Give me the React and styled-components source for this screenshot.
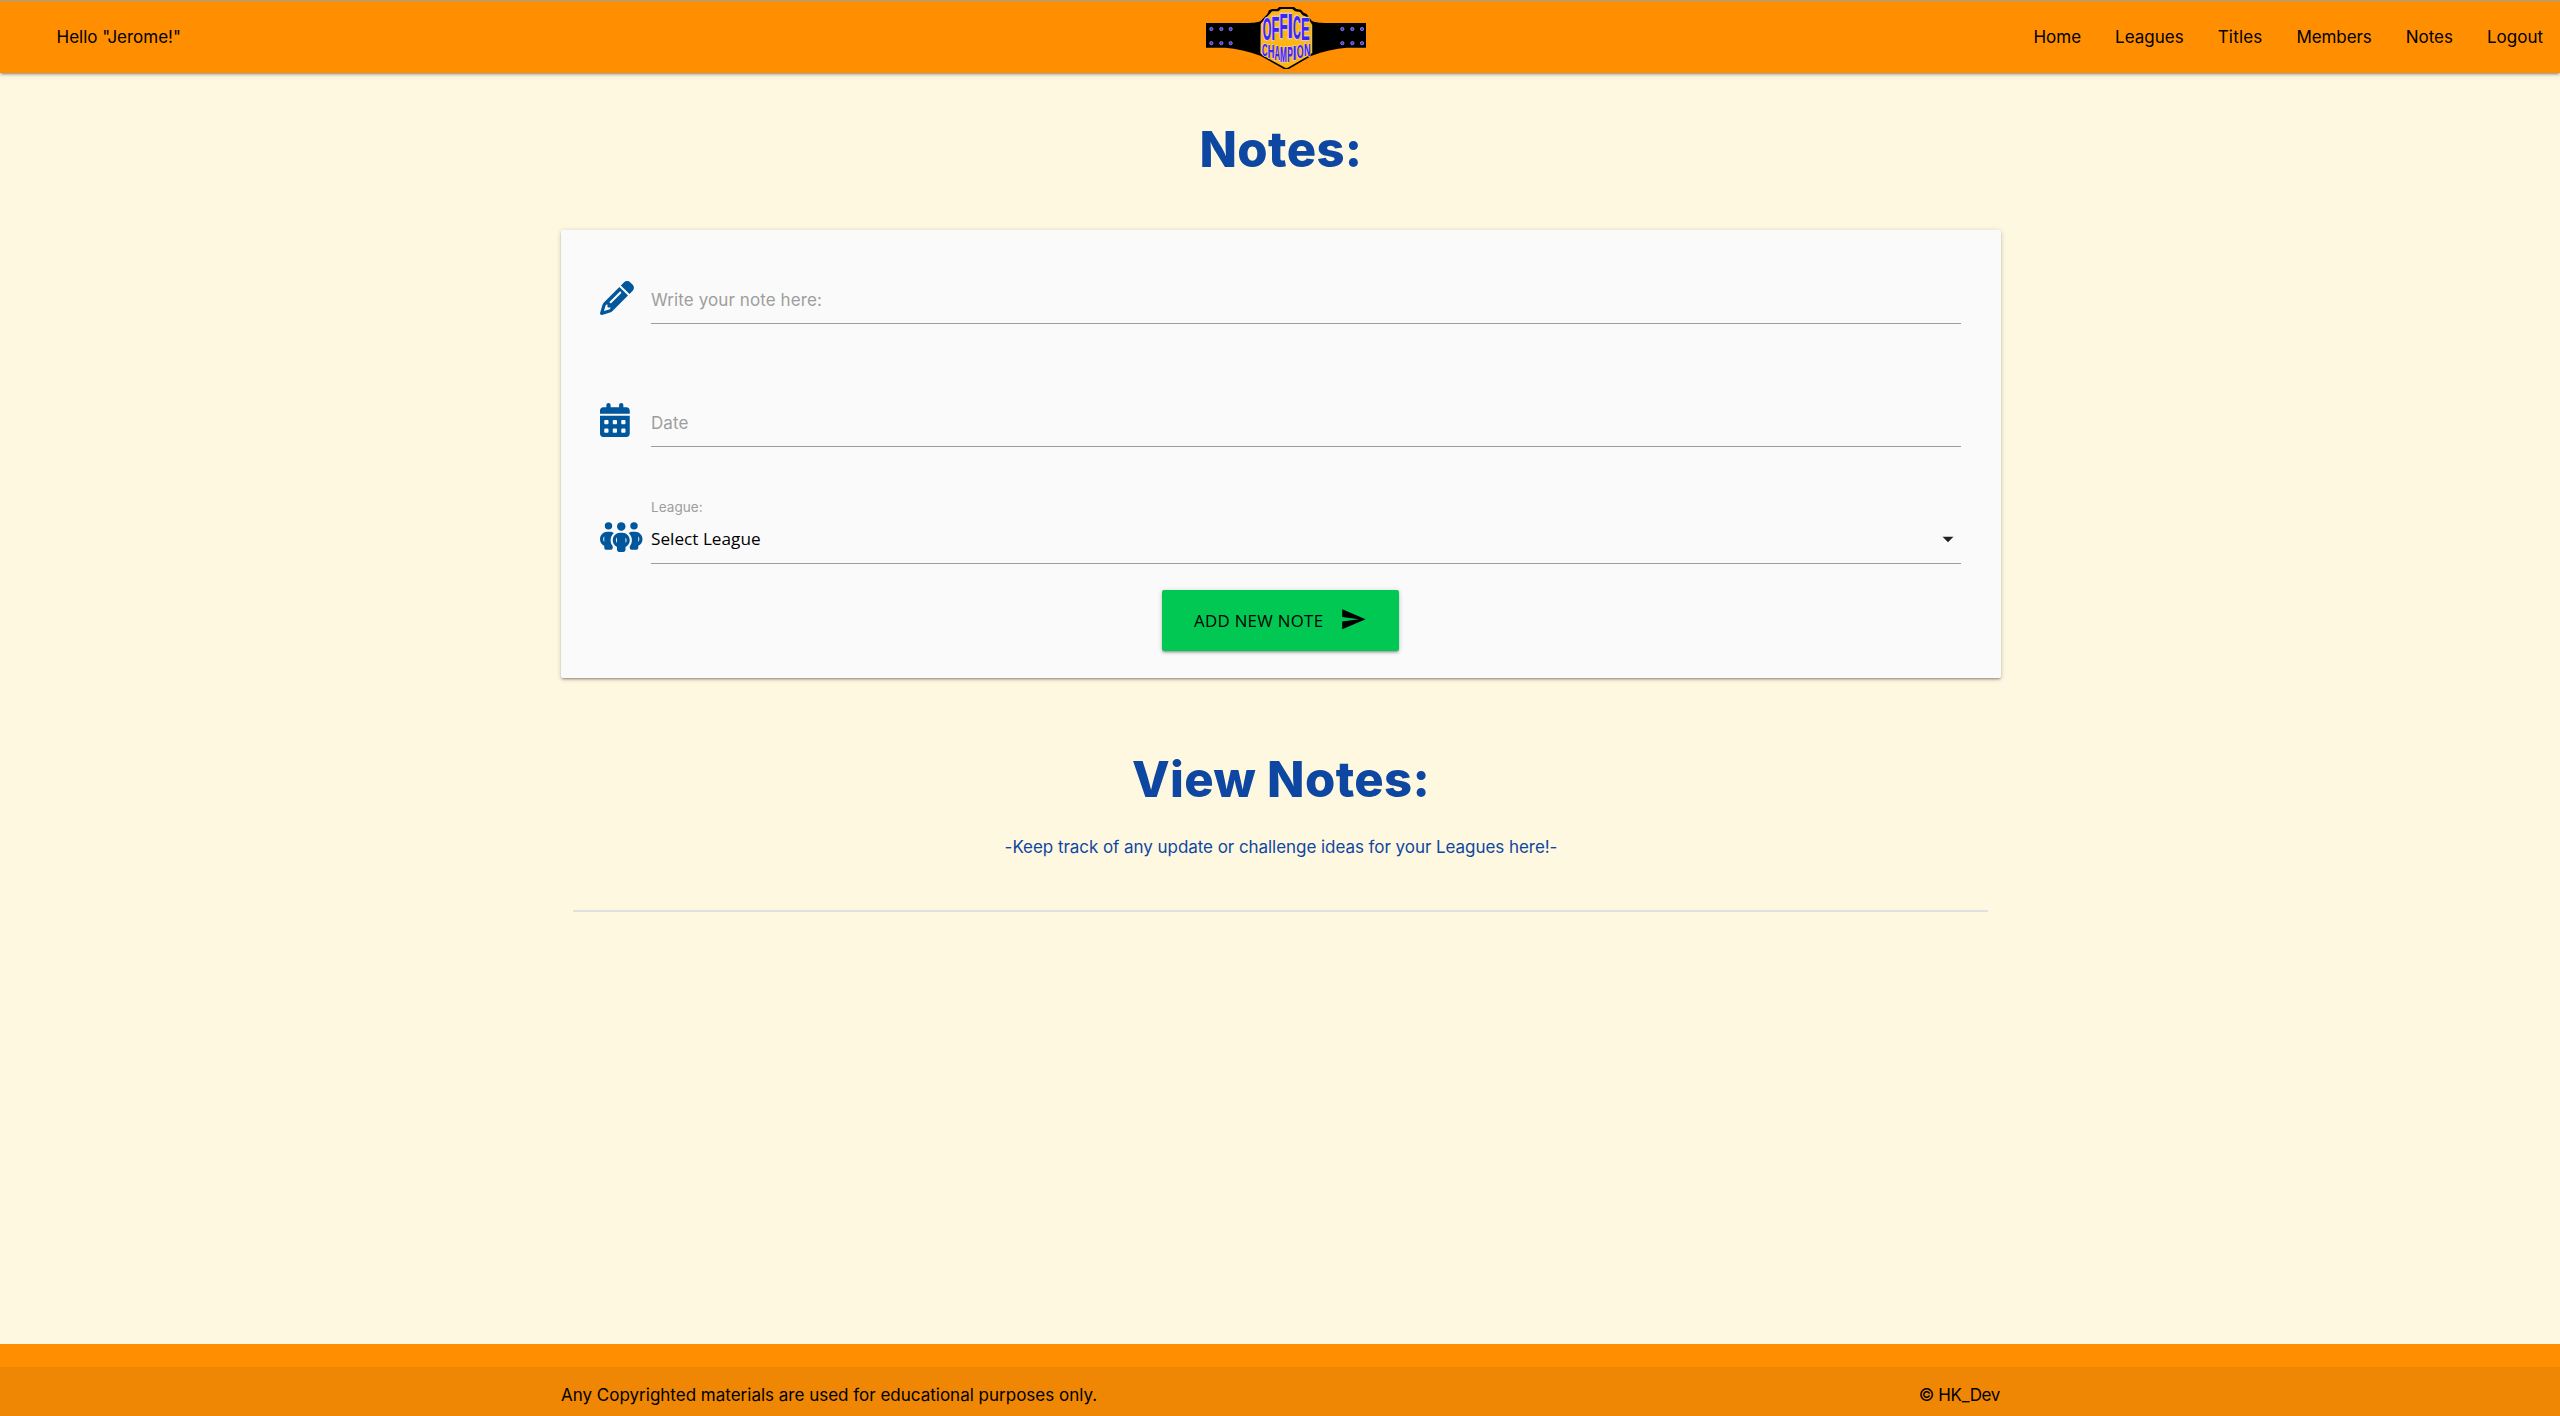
import React from 'react';
import styled, { createGlobalStyle } from 'styled-components';
import { FaPencil, FaCalendarDays, FaPeopleGroup } from 'react-icons/fa6';
import { MdSend, MdArrowDropDown } from 'react-icons/md';

const GlobalStyle = createGlobalStyle`
  *, *::before, *::after { box-sizing: border-box; }
  body {
    margin: 0;
    background: #fff8e1;
    font-family: Inter, "Liberation Sans", sans-serif;
    font-size: 17px;
    color: #000;
  }
  h1, h2, p { margin: 0; }
`;

const Page = styled.div`
  display: flex;
  flex-direction: column;
  height: 1416px;
  overflow: hidden;
`;

const NavBar = styled.nav`
  display: grid;
  grid-template-columns: 1fr 160px 1fr;
  align-items: center;
  flex: none;
  height: 73px;
  padding-left: 12px;
  background: #ff8f00;
  border-top: 1px solid #90a4ae;
  box-shadow: 0 2px 2px 0 rgba(0, 0, 0, 0.14), 0 3px 1px -2px rgba(0, 0, 0, 0.12),
    0 1px 5px 0 rgba(0, 0, 0, 0.2);
`;

const Greeting = styled.span`
  padding-left: 44.5px;
`;

const Logo = styled.svg`
  display: block;
  width: 160px;
  height: 64px;
`;

const NavLinks = styled.ul`
  display: flex;
  justify-content: flex-end;
  margin: 0;
  padding: 0;
  list-style: none;
`;

const NavLink = styled.a`
  display: block;
  padding: 0 17px;
  letter-spacing: ${(p) => p.$track || 0}px;
  color: #000;
  cursor: pointer;
`;

const Container = styled.main`
  flex: 1;
  width: 1442px;
  margin: 0 auto;
  padding-left: 2px;
`;

const Heading = styled.h1`
  padding-top: ${(p) => p.$space}px;
  font-size: 49px;
  font-weight: 800;
  line-height: 54px;
  letter-spacing: 0.35px;
  text-align: center;
  color: #0d47a1;
`;

const Card = styled.form`
  display: flex;
  flex-direction: column;
  height: 448px;
  margin-top: 53px;
  padding: 46px 40px 27px 39px;
  background: #fafafa;
  border-radius: 2px;
  box-shadow: 0 2px 2px 0 rgba(0, 0, 0, 0.14), 0 3px 1px -2px rgba(0, 0, 0, 0.12),
    0 1px 5px 0 rgba(0, 0, 0, 0.2);
`;

const FieldRow = styled.div`
  display: grid;
  grid-template-columns: 51px 1fr;
  align-items: end;
  margin-bottom: ${(p) => p.$gap}px;
`;

const IconSlot = styled.span`
  display: flex;
  align-self: end;
  height: 34px;
  margin-bottom: ${(p) => p.$lift}px;
  color: #01579b;
  svg { display: block; width: ${(p) => p.$width}px; height: 34px; flex: none; }
`;

const FieldLabel = styled.label`
  display: block;
  font-size: 13.6px;
  line-height: 18px;
  color: #9e9e9e;
`;

const Field = styled.div`
  display: flex;
  align-items: center;
  height: 48px;
  padding-top: 1px;
  border-bottom: 1px solid #9e9e9e;
  color: #9e9e9e;
  letter-spacing: 0.1px;
`;

const SelectField = styled(Field)`
  justify-content: space-between;
  font-family: "Open Sans", "Noto Sans", sans-serif;
  font-size: 17.2px;
  letter-spacing: 0;
  line-height: 24px;
  color: #000;
  padding: 0 0 2px;
  svg { width: 26px; height: 26px; color: #212121; }
`;

const SubmitButton = styled.button`
  display: flex;
  align-items: center;
  align-self: center;
  gap: 17px;
  width: 237px;
  height: 61px;
  margin: 26px 0 0;
  padding: 0 32px;
  border: 0;
  border-radius: 2px;
  background: #00c853;
  color: #000;
  font-family: "Open Sans", "Noto Sans", sans-serif;
  font-size: 16.8px;
  letter-spacing: 0.33px;
  white-space: nowrap;
  box-shadow: 0 2px 2px 0 rgba(0, 0, 0, 0.14), 0 3px 1px -2px rgba(0, 0, 0, 0.12),
    0 1px 5px 0 rgba(0, 0, 0, 0.2);
  svg { flex: none; width: 26.7px; height: 26.7px; margin-top: -2px; }
`;

const Tagline = styled.p`
  margin-top: 27px;
  line-height: 26px;
  letter-spacing: -0.05px;
  text-align: center;
  color: #0d47a1;
`;

const Divider = styled.div`
  height: 2px;
  margin: 50px 13px 0 12px;
  background: #e0e0e0;
`;

const Footer = styled.footer`
  flex: none;
  height: 72px;
  padding-top: 23px;
  background: #ff8f00;
`;

const FooterBar = styled.div`
  height: 49px;
  padding-top: 15px;
  background: rgba(51, 51, 51, 0.08);
`;

const FooterContent = styled.div`
  display: flex;
  justify-content: space-between;
  width: 1440px;
  margin: 0 auto;
  padding-left: 1px;
  line-height: 26px;
`;

const Credit = styled.span`
  letter-spacing: -0.35px;
`;

const LINKS = [
  { label: 'Home' },
  { label: 'Leagues' },
  { label: 'Titles', track: 0.2 },
  { label: 'Members', track: -0.1 },
  { label: 'Notes' },
  { label: 'Logout' },
];

// Each letter: character, left edge, right edge, cap top, baseline, natural width at 10px.
const LETTERS = [
  ['O', 189, 213, 57, 121, 7.2],
  ['F', 216, 236, 48, 119, 5.2],
  ['F', 240, 261, 40, 114, 5.2],
  ['I', 266, 275, 41, 113, 1.5],
  ['C', 280, 301, 45, 116, 6.5],
  ['E', 305, 327, 55, 119, 5.6],
  ['C', 187, 202, 134, 167, 6.5],
  ['H', 205, 221, 135, 173, 5.8],
  ['A', 224, 240, 137, 179, 7],
  ['M', 242, 259, 139, 186, 6.9],
  ['P', 263, 277, 139, 186, 5.6],
  ['I', 281, 287, 137, 180, 1.5],
  ['O', 291, 310, 136, 174, 7.2],
  ['N', 314, 330, 134, 167, 5.8],
];

const STUDS = [34, 64, 92, 427, 457, 486];

function BeltLogo() {
  return (
    <Logo viewBox="18 15 480 192" preserveAspectRatio="none" role="img">
      <path
        d="M18 69H128C155 69 174 68 183 62L202 42L207 31L216 27H231L238 21H282L289 27L303 29L311 38L320 42L335 62C345 68 365 69 390 69H498V143H440C405 146 370 154 335 167L268 206Q259 211 250 206L181 167C145 154 110 146 76 143H18Z"
        fill="#000"
      />
      <path
        d="M183 70L209 42L216 34H235L243 27H277L285 34L300 36L308 46L316 49L333 68L336 74V158L331 164L263 203L257 204L187 166L182 160Z"
        fill="#ffb512"
      />
      <path d="M183 72V160M335.500 74V160" stroke="#d8cbb0" strokeWidth="2" />
      {STUDS.map((x) => (
        <g key={x} fill="#4a32f0" stroke="#a9a0dc" strokeWidth="2">
          <circle cx={x} cy="87" r="5" />
          <circle cx={x} cy="129.500" r="5" />
        </g>
      ))}
      <g
        fontFamily="Liberation Sans, sans-serif"
        fontSize="10"
        fontWeight="700"
        textAnchor="middle"
        fill="#3d22ff"
        stroke="#d9c8b8"
        paintOrder="stroke"
      >
        {LETTERS.map(([ch, l, r, t, b, w], i) => (
          <text
            key={i}
            strokeWidth="0.9"
            transform={`translate(${(l + r) / 2} ${b}) scale(${(r - l) / w} ${(b - t) / 7})`}
          >
            {ch}
          </text>
        ))}
      </g>
    </Logo>
  );
}

export default function App() {
  return (
    <Page>
      <GlobalStyle />
      <NavBar>
        <Greeting>Hello "Jerome!"</Greeting>
        <BeltLogo />
        <NavLinks>
          {LINKS.map((l) => (
            <li key={l.label}>
              <NavLink $track={l.track}>{l.label}</NavLink>
            </li>
          ))}
        </NavLinks>
      </NavBar>
      <Container>
        <Heading $space={50}>Notes:</Heading>
        <Card>
          <FieldRow $gap={75}>
            <IconSlot $lift={9} $width={34}><FaPencil /></IconSlot>
            <Field>Write your note here:</Field>
          </FieldRow>
          <FieldRow $gap={51}>
            <IconSlot $lift={10} $width={29.75}><FaCalendarDays /></IconSlot>
            <Field>Date</Field>
          </FieldRow>
          <FieldRow $gap={0}>
            <IconSlot $lift={10} $width={42.5}><FaPeopleGroup /></IconSlot>
            <div>
              <FieldLabel>League:</FieldLabel>
              <SelectField>
                Select League
                <MdArrowDropDown />
              </SelectField>
            </div>
          </FieldRow>
          <SubmitButton type="button">
            ADD NEW NOTE
            <MdSend />
          </SubmitButton>
        </Card>
        <Heading as="h2" $space={75}>View Notes:</Heading>
        <Tagline>-Keep track of any update or challenge ideas for your Leagues here!-</Tagline>
        <Divider />
      </Container>
      <Footer>
        <FooterBar>
          <FooterContent>
            <span>Any Copyrighted materials are used for educational purposes only.</span>
            <Credit>© HK_Dev</Credit>
          </FooterContent>
        </FooterBar>
      </Footer>
    </Page>
  );
}
